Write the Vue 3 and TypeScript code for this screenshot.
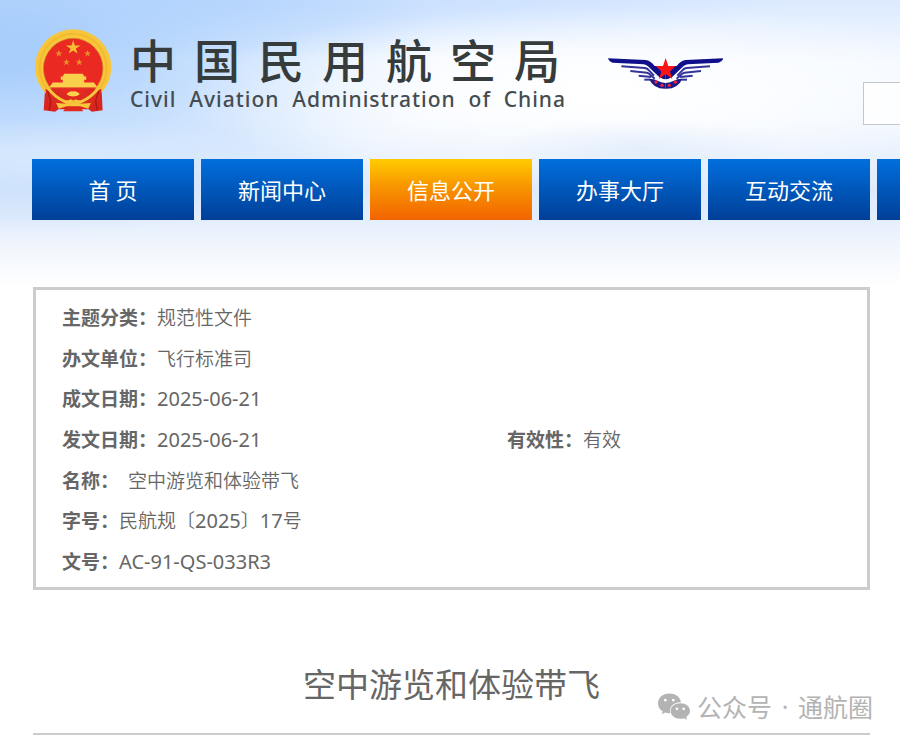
<script setup lang="ts">
import { ref } from 'vue'

interface NavItem {
  label: string
  active?: boolean
}

interface Field {
  label: string
  value: string
  spaced?: boolean
}

interface Run {
  text: string
  latin: boolean
}

const brand: string[] = Array.from('中国民用航空局')
const brandEnglish: string[] = ['Civil', 'Aviation', 'Administration', 'of', 'China']

const nav: NavItem[] = [
  { label: '首 页' },
  { label: '新闻中心' },
  { label: '信息公开', active: true },
  { label: '办事大厅' },
  { label: '互动交流' },
  { label: '' },
]

const rows: Field[][] = [
  [{ label: '主题分类', value: '规范性文件' }],
  [{ label: '办文单位', value: '飞行标准司' }],
  [{ label: '成文日期', value: '2025-06-21' }],
  [
    { label: '发文日期', value: '2025-06-21' },
    { label: '有效性', value: '有效' },
  ],
  [{ label: '名称', value: '空中游览和体验带飞', spaced: true }],
  [{ label: '字号', value: '民航规〔2025〕17号' }],
  [{ label: '文号', value: 'AC-91-QS-033R3' }],
]

// Latin runs are set in their own face and size next to the Chinese text.
function runs(value: string): Run[] {
  return value
    .split(/([\x20-\x7e]+)/)
    .filter((text) => text !== '')
    .map((text) => ({ text, latin: /^[\x20-\x7e]/.test(text) }))
}

const keyword = ref('')
</script>

<template>
  <div class="page">
    <header class="header">
      <div class="masthead">
        <svg class="emblem" viewBox="44 42 230 248" aria-hidden="true">
          <path d="M74 222L70 285L104 289L114 282H204L214 289L246 285L243 222Z" fill="#d9251f" />
          <ellipse cx="158" cy="156" rx="114" ry="113" fill="#f8c63a" />
          <ellipse cx="158" cy="158" rx="100" ry="102" fill="none" stroke="#f2ba30" stroke-width="6" />
          <ellipse cx="158" cy="160" rx="89" ry="90" fill="#ea2a22" stroke="#cf8a25" stroke-width="2" />
          <path d="M158 75L163 91L180 91L166 100L171 115L158 106L145 115L150 100L136 91L153 91Z" fill="#f6bd35" />
          <g fill="#e98f2a">
            <path id="star" d="M115 105L118 112L125 112L119 117L122 124L115 120L108 124L111 117L105 112L112 112Z" />
            <use href="#star" x="86" />
            <use href="#star" x="23" y="26" />
            <use href="#star" x="61" y="26" />
          </g>
          <path d="M131 176H187L191 184H197V194H191V202H220L231 217H86L97 202H127V194H121V184H127Z" fill="#fbd04a" />
          <path d="M84 219H232" stroke="#c9452a" stroke-width="2" />
          <path d="M75 222L120 222Q142 248 158 242Q174 248 196 222L243 222L238 253L205 274L158 256L111 274L80 253Z" fill="#dc2a20" />
          <path d="M82 218Q104 247 132 258Q148 264 158 249Q168 264 184 258Q212 247 234 218" fill="none" stroke="#f8c63a" stroke-width="9" />
          <path d="M138 236Q148 226 158 229Q168 226 178 236Q168 246 158 242Q148 246 138 236Z" fill="#fbd04a" />
          <path d="M148 250Q158 238 169 250Q158 260 148 250Z" fill="#df2b20" />
          <path d="M107 263L139 265L158 260L178 265L211 263L203 280L179 273H139L115 280Z" fill="#f8c63a" />
          <path d="M133 281Q158 269 184 281L188 288H128Z" fill="#df2b20" />
          <path d="M82 228L91 257L86 285M234 228L225 257L230 285" fill="none" stroke="#ad1917" stroke-width="4" />
        </svg>

        <h1 class="brand">
          <span class="brand-cn"><span v-for="char in brand" :key="char">{{ char }}</span></span>
          <span class="brand-en"><span v-for="word in brandEnglish" :key="word">{{ word }}</span></span>
        </h1>

        <svg class="wings" viewBox="38 55 345 93" aria-hidden="true">
          <g id="wing">
            <path d="M38 56L151 61Q165 62 178 79H204L211 92V119Q197 118 186 107L158 80Q153 75 145 74L52 69Q41 66 38 56Z" fill="#10108a" />
            <g fill="none" stroke="#33339a" stroke-width="6">
              <path d="M78 80L149 85Q156 86 161 92L176 108" />
              <path d="M105 94L155 99Q161 100 167 107L178 117" />
              <path d="M130 108L168 112" />
              <path d="M147 120H164" />
            </g>
            <path d="M161 117Q180 118 190 125Q200 130 211 130V147Q174 148 161 117Z" fill="#191987" />
          </g>
          <use href="#wing" transform="translate(422 0) scale(-1 1)" />
          <path d="M183 79H239L224 96H198Z" fill="#e21c3d" />
          <path d="M211 55L219 79H241L223 93L231 118L211 103L191 118L199 93L181 79H203Z" fill="#fb1515" />
          <g fill="#ef2440">
            <circle cx="182" cy="127" r="5" /><circle cx="200" cy="137" r="5" />
            <circle cx="222" cy="137" r="5" /><circle cx="240" cy="127" r="5" />
          </g>
        </svg>

        <input v-model="keyword" class="search" type="text" aria-label="搜索" />
      </div>

      <nav class="nav">
        <a
          v-for="(item, index) in nav"
          :key="index"
          href="#"
          class="nav-item"
          :class="{ active: item.active }"
        >{{ item.label }}</a>
      </nav>
    </header>

    <main class="content">
      <dl class="info">
        <div v-for="(row, index) in rows" :key="index" class="info-row">
          <div v-for="field in row" :key="field.label" class="field">
            <dt>{{ field.label }}：</dt>
            <dd :class="{ spaced: field.spaced }"><span
              v-for="(run, position) in runs(field.value)"
              :key="position"
              :class="{ latin: run.latin }"
            >{{ run.text }}</span></dd>
          </div>
        </div>
      </dl>

      <section class="article">
        <h2 class="title">空中游览和体验带飞</h2>
        <div class="watermark">
          <svg class="chat" viewBox="54 70 96 80" aria-hidden="true">
            <path d="M88 71C68 71 54 84 54 101C54 111 59 119 68 124L65 133L76 128Q82 130 88 130H91C86 112 100 96 123 97C120 81 106 71 88 71Z" />
            <path d="M121 100C104 100 92 110 92 123C92 137 104 147 121 147Q127 147 132 145L141 150L139 141C146 137 150 130 150 123C150 110 138 100 121 100Z" />
            <g fill="#fff">
              <circle cx="76" cy="91" r="4" /><circle cx="100" cy="91" r="4" />
              <circle cx="111" cy="117" r="4" /><circle cx="131" cy="117" r="4" />
            </g>
          </svg>
          <span>公众号</span>
          <span class="dot">·</span>
          <span>通航圈</span>
        </div>
      </section>
    </main>
  </div>
</template>

<style>
body {
  margin: 0;
  background: #fff;
}
</style>

<style scoped>
.page {
  overflow: hidden;
  color: #666;
  font-family: "Noto Sans", "Noto Sans CJK SC", sans-serif;
}

.header {
  padding: 24px 0 67px 32px;
  background:
    linear-gradient(to bottom, rgba(255, 255, 255, 0) 76%, #fff 100%),
    radial-gradient(ellipse 150px 30px at 640px 150px, rgba(205, 224, 248, 0.4), rgba(205, 224, 248, 0)),
    radial-gradient(ellipse 420px 90px at 600px 95px, #fff 10%, rgba(255, 255, 255, 0)),
    radial-gradient(ellipse 240px 36px at 60px 155px, rgba(222, 237, 253, 0.7), rgba(222, 237, 253, 0)),
    radial-gradient(ellipse 440px 190px at 0 50px, #a8cefc 10%, rgba(190, 218, 252, 0)),
    radial-gradient(ellipse 560px 60px at 230px 0, #c2dcfe, rgba(200, 224, 254, 0)),
    linear-gradient(to bottom, #dceaff 0, #f4f9ff 60px, #f1f7ff 120px, #dfebfc 190px, #e8f0fc 250px);
}

.masthead {
  display: flex;
  height: 135px;
}

.emblem {
  flex: none;
  width: 77px;
  height: 83px;
  margin: 5px 0 0 3px;
}

.brand {
  flex: none;
  display: flex;
  flex-direction: column;
  width: 436px;
  margin: 13px 0 0 18px;
  color: #363b3c;
}

.brand-cn {
  display: flex;
  justify-content: space-between;
  padding: 0 6px 0 0;
  font: 500 46px/50px "Liberation Sans", "Noto Sans CJK SC", sans-serif;
}

.brand-en {
  display: flex;
  justify-content: space-between;
  color: #454c50;
  font: 500 21px/24px "Noto Sans", sans-serif;
  letter-spacing: 1px;
}

.wings {
  flex: none;
  width: 115px;
  height: 31px;
  margin: 34px 0 0 42px;
}

.search {
  flex: none;
  box-sizing: border-box;
  width: 320px;
  height: 43px;
  margin: 58px 0 0 140px;
  padding: 0 12px;
  border: 1px solid #c4c6c8;
  border-radius: 0;
  outline: none;
  background: rgba(255, 255, 255, 0.8);
  font: 18px "Noto Sans CJK SC", sans-serif;
}

.nav {
  display: flex;
  gap: 7px;
}

.nav-item {
  flex: none;
  width: 162px;
  height: 61px;
  background: linear-gradient(#016fdc, #003f98);
  color: #fff;
  font: 400 22px/60px "Noto Sans CJK SC", sans-serif;
  text-align: center;
  text-decoration: none;
}

.nav-item.active {
  background: linear-gradient(#ffcc00, #f89500 45%, #f26300);
}

.content {
  padding: 0 30px 0 33px;
}

.info {
  display: grid;
  grid-auto-rows: 1fr;
  min-height: 284px;
  margin: 0;
  padding: 7px 26px 6px;
  border: 3px solid #ccc;
  background: #fff;
  font: 19px/38px "Noto Sans CJK SC", sans-serif;
}

.info-row {
  display: grid;
  grid-template-columns: 445px 1fr;
  align-content: center;
}

.field {
  display: flex;
  align-items: baseline;
  white-space: nowrap;
}

.field dt {
  font-weight: 700;
}

.field dd {
  margin: 0;
  font-weight: 350;
}

.field .latin {
  font: 400 20px/30px "Noto Sans", sans-serif;
}

.field .spaced {
  margin-left: 9px;
}

.article {
  position: relative;
  margin-top: 60px;
  padding-bottom: 17px;
  border-bottom: 2px solid #ccc;
}

.title {
  margin: 0;
  font: 400 33px/66px "Noto Sans CJK SC", sans-serif;
  text-align: center;
}

.watermark {
  position: absolute;
  right: -3px;
  bottom: 7px;
  display: flex;
  align-items: center;
  color: #b3b3b3;
  font: 400 25px/40px "Noto Sans CJK SC", sans-serif;
}

.chat {
  width: 32px;
  height: 27px;
  margin-right: 7px;
  fill: #b3b3b3;
}

.dot {
  width: 26px;
  font-family: "Noto Sans", sans-serif;
  text-align: center;
}
</style>
